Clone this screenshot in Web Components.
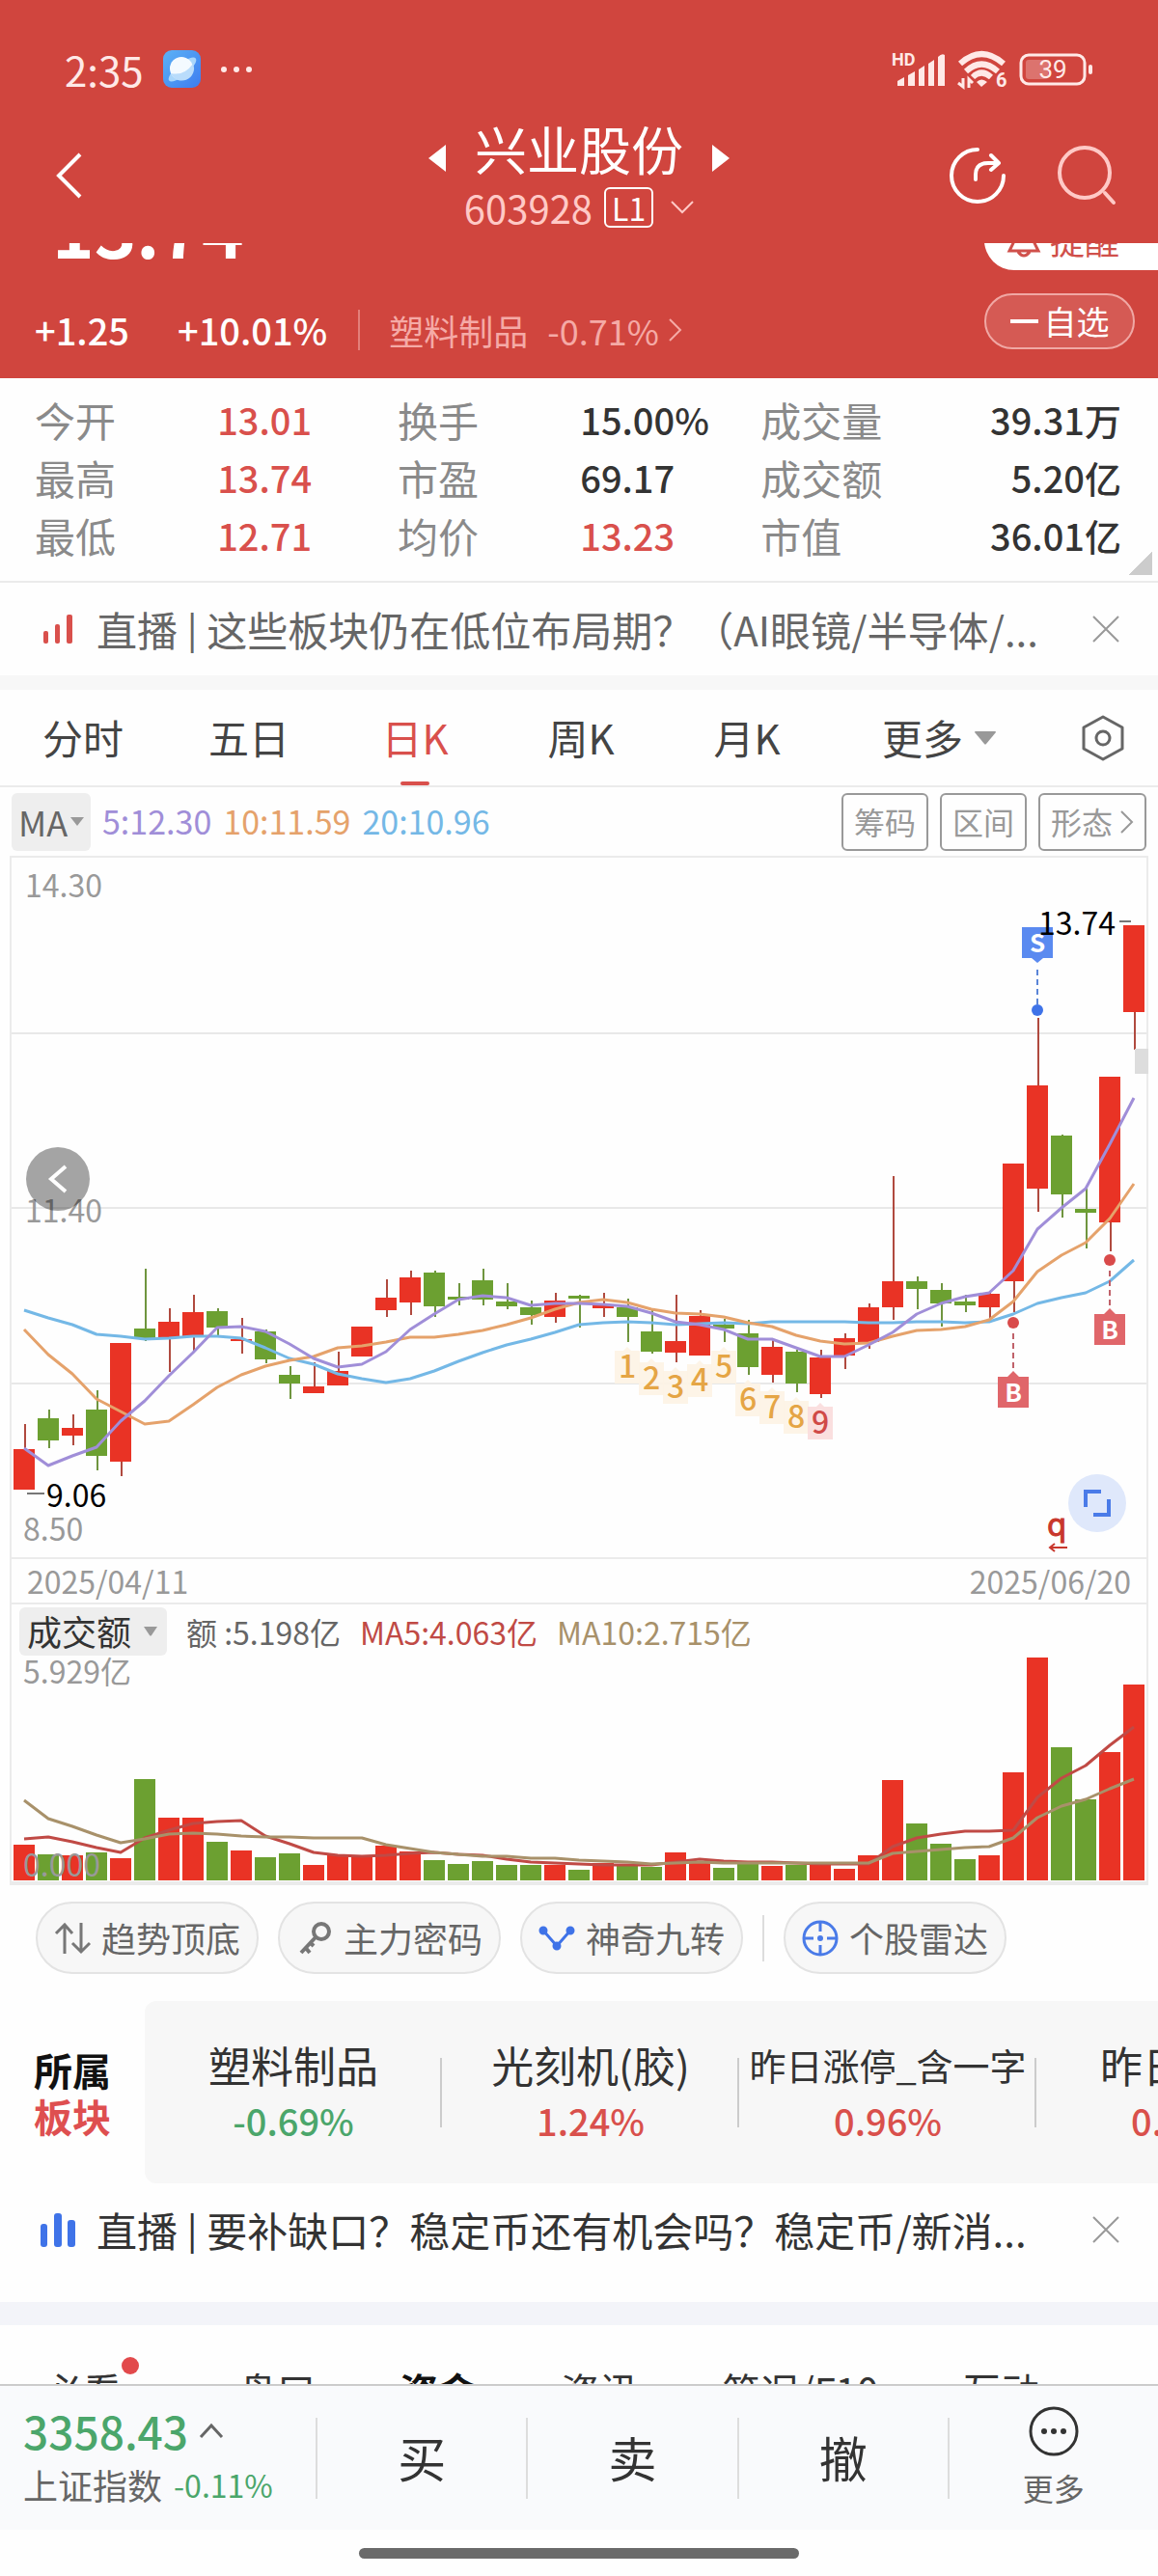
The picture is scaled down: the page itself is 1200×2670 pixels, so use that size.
<!DOCTYPE html>
<html lang="zh-CN">
<head>
<meta charset="utf-8">
<meta name="viewport" content="width=device-width, initial-scale=1">
<title>兴业股份 603928</title>
<style>
  :root {
    --brand: #d0453e;
    --rise: #d9504c;
    --fall: #4ba66b;
    --ink: #333;
    --muted: #8a8a8a;
    --line: #ebebeb;
    --fill: #f7f7f7;
  }

  body {
    margin: 0;
    background: #fefefe;
    color: var(--ink);
    font-family: "Noto Sans CJK SC", sans-serif;
    font-size: 36px;
    line-height: 1.2;
  }
</style>
</head>
<body>
<status-bar></status-bar>
<stock-header code="603928" level="L1">兴业股份</stock-header>
<price-strip></price-strip>
<quote-grid></quote-grid>
<live-notice tone="red">直播 | 这些板块仍在低位布局期？（AI眼镜/半导体/...</live-notice>
<period-tabs></period-tabs>
<ma-legend></ma-legend>
<k-chart></k-chart>
<turnover-chart></turnover-chart>
<tool-chips></tool-chips>
<board-list>
  <board-item change="-0.69%">塑料制品</board-item>
  <board-item change="1.24%">光刻机(胶)</board-item>
  <board-item change="0.96%" small>昨日涨停_含一字</board-item>
  <board-item change="0.96%">昨日涨停</board-item>
</board-list>
<live-notice tone="blue">直播 | 要补缺口？稳定币还有机会吗？稳定币/新消...</live-notice>
<section-tabs></section-tabs>
<trade-bar></trade-bar>

<script>
const reset = `
  :host, * { box-sizing: border-box; }
  svg { display: block; flex: none; overflow: visible; }
  button, select { margin: 0; padding: 0; border: 0; background: none; color: inherit; font: inherit; cursor: pointer; }
  select { appearance: none; }
  a { color: inherit; text-decoration: none; }
`;

class BaseElement extends HTMLElement {
  constructor() {
    super();

    this.attachShadow({ mode: 'open' });
  }

  connectedCallback() {
    this.shadowRoot.innerHTML = `<style>${reset}${this.styles()}</style>${this.markup()}`;
  }
}

customElements.define('status-bar', class extends BaseElement {
  styles() {
    return `
      :host { display: flex; justify-content: space-between; align-items: center; height: 126px; padding: 18px 66px 0 67px; background: var(--brand); color: #ffe9e7; }
      .left, .right { display: flex; align-items: center; }
      .left { gap: 20px; font-size: 42px; }
      .right { gap: 12px; }
    `;
  }

  markup() {
    return `
      <div class="left">
        <span>2:35</span>
        <svg width="39" height="39" viewBox="0 0 39 39">
          <defs><linearGradient id="app" x1="0" y1="0" x2="1" y2="1"><stop offset="0" stop-color="#5cb2f6"/><stop offset="1" stop-color="#3d7cf0"/></linearGradient></defs>
          <rect width="39" height="39" rx="9" fill="url(#app)"/>
          <ellipse cx="20" cy="20" rx="18" ry="6" transform="rotate(-40 20 20)" fill="#a9d6fb"/>
          <circle cx="19" cy="19" r="12" fill="#f4faff"/>
          <path d="M8 24Q22 27 31 14A12 12 0 0 1 8 24Z" fill="#b9dcfb"/>
        </svg>
        <svg width="34" height="8" viewBox="0 0 34 8" fill="currentColor"><circle cx="4" cy="4" r="3"/><circle cx="17" cy="4" r="3"/><circle cx="30" cy="4" r="3"/></svg>
      </div>
      <div class="right">
        <svg width="56" height="36" viewBox="0 0 56 36" fill="currentColor">
          <text x="0" y="14" font-size="18" font-weight="700" font-family="Roboto, sans-serif">HD</text>
          <path d="M6 35v-5l7-4v9zM17 35V24l7-4v15zM28 35V18l6-4v21zM38 35V12l6-4v27zM48 35V5q4-4 7-2v32z"/>
        </svg>
        <svg width="52" height="40" viewBox="0 0 52 40" fill="none" stroke="currentColor" stroke-width="6">
          <path d="M3 14Q25 -6 48 14M9 22Q25 7 42 22M16 28Q25 19 35 28"/>
          <path d="M20 33Q25 28 31 33L25 38Z" fill="currentColor" stroke="none"/>
          <path d="M6 29v9l-5-4M12 39v-9l4 4" stroke-width="3"/>
          <text x="40" y="38" font-size="20" font-weight="700" font-family="Roboto, sans-serif" fill="currentColor" stroke="none">6</text>
        </svg>
        <svg width="78" height="34" viewBox="0 0 78 34">
          <rect x="2" y="2" width="66" height="30" rx="8" fill="none" stroke="currentColor" stroke-width="3"/>
          <rect x="7" y="7" width="23" height="20" rx="3" fill="#fff" opacity=".25"/>
          <rect x="72" y="12" width="4" height="10" rx="2" fill="currentColor"/>
          <text x="35" y="26" text-anchor="middle" font-size="26" font-family="Roboto, sans-serif" fill="currentColor">39</text>
        </svg>
      </div>
    `;
  }
});

customElements.define('stock-header', class extends BaseElement {
  styles() {
    return `
      :host { display: grid; grid-template-columns: 1fr auto 1fr; align-items: start; height: 126px; padding: 0 44px; background: var(--brand); color: #fff; }
      .back { justify-self: start; margin-top: 32px; padding-left: 12px; }
      .names { display: flex; flex-direction: column; align-items: center; }
      h1 { display: flex; align-items: center; gap: 30px; height: 56px; margin: 0; font-size: 54px; font-weight: 400; line-height: 56px; white-space: nowrap; }
      h1 button { padding-top: 20px; }
      .code { display: flex; align-items: center; gap: 12px; height: 66px; color: #ffc9c6; font-size: 40px; }
      .level { padding: 0 6px; border: 2px solid #fff; border-radius: 6px; color: #fff; font-size: 32px; line-height: 38px; }
      .code svg { margin-left: 6px; }
      .tools { display: flex; justify-self: end; gap: 54px; margin-top: 26px; }
    `;
  }

  markup() {
    return `
      <button class="back" aria-label="返回"><svg width="30" height="48" viewBox="0 0 30 48" fill="none" stroke="currentColor" stroke-width="4"><path d="M27 2L5 24l22 22"/></svg></button>
      <div class="names">
        <h1>
          <button aria-label="上一只"><svg width="18" height="28" viewBox="0 0 18 28" fill="currentColor"><path d="M18 0v28L0 14z"/></svg></button>
          <slot></slot>
          <button aria-label="下一只"><svg width="18" height="28" viewBox="0 0 18 28" fill="currentColor"><path d="M0 0v28l18-14z"/></svg></button>
        </h1>
        <div class="code">
          <span>${this.getAttribute('code')}</span>
          <span class="level">${this.getAttribute('level')}</span>
          <svg width="24" height="14" viewBox="0 0 24 14" fill="none" stroke="currentColor" stroke-width="2"><path d="M1 1l11 11L23 1"/></svg>
        </div>
      </div>
      <div class="tools">
        <button aria-label="分享"><svg width="60" height="60" viewBox="0 0 60 60" fill="none" stroke="currentColor" stroke-width="4" stroke-linecap="round" stroke-linejoin="round"><path d="M31 3A27 27 0 1 0 58 30"/><path d="M29 34V29Q29 17 42 17H52M45 9l8 8-8 7"/></svg></button>
        <button aria-label="搜索"><svg width="60" height="60" viewBox="0 0 60 60" fill="none" stroke="#ffc9c6" stroke-width="4" stroke-linecap="round"><circle cx="28" cy="27" r="26"/><path d="M49 48l9 10"/></svg></button>
      </div>
    `;
  }
});

customElements.define('price-strip', class extends BaseElement {
  styles() {
    return `
      :host { display: block; height: 140px; background: var(--brand); color: #fff; }
      .peek { display: flex; justify-content: space-between; align-items: flex-end; height: 28px; padding-left: 54px; overflow: hidden; }
      .price { padding-bottom: 7px; font-size: 74px; font-weight: 700; line-height: 74px; }
      .remind { display: flex; align-items: center; gap: 10px; height: 62px; padding: 0 40px 0 24px; border-radius: 31px 0 0 31px; background: #fff; color: #d0504b; font-size: 36px; }
      .row { display: flex; justify-content: space-between; align-items: flex-start; padding: 24px 24px 0 36px; }
      .change, .industry { display: flex; align-items: center; }
      .change { height: 76px; gap: 50px; font-size: 38px; font-weight: 500; }
      .industry { gap: 20px; margin-left: -18px; padding-left: 30px; border-left: 2px solid #e37f7a; color: #f5aaa6; font-size: 36px; font-weight: 400; line-height: 42px; }
      .industry svg { margin-left: -10px; }
      .pill { display: flex; align-items: center; justify-content: center; gap: 6px; width: 156px; height: 58px; border: 2px solid #f0a8a4; border-radius: 29px; background: #d55a54; font-size: 34px; }
    `;
  }

  markup() {
    return `
      <div class="peek">
        <div class="price">13.74</div>
        <button class="remind"><svg width="34" height="36" viewBox="0 0 34 36" fill="none" stroke="currentColor" stroke-width="3"><path d="M2 29h30l-4-8V14a11 11 0 0 0-22 0v7zM11 30q6 8 12 0"/></svg>提醒</button>
      </div>
      <div class="row">
        <div class="change">
          <span>+1.25</span>
          <span>+10.01%</span>
          <a class="industry" href="#industry"><span>塑料制品</span><span>-0.71%</span><svg width="14" height="24" viewBox="0 0 14 24" fill="none" stroke="currentColor" stroke-width="2"><path d="M1 1l11 11L1 23"/></svg></a>
        </div>
        <button class="pill"><svg width="29" height="4" viewBox="0 0 29 4"><path d="M0 2h29" stroke="#fff" stroke-width="4"/></svg>自选</button>
      </div>
    `;
  }
});

customElements.define('quote-grid', class extends BaseElement {
  static rows = [
    ['今开', '13.01', 'up', '换手', '15.00%', '', '成交量', '39.31万'],
    ['最高', '13.74', 'up', '市盈', '69.17', '', '成交额', '5.20亿'],
    ['最低', '12.71', 'up', '均价', '13.23', 'up', '市值', '36.01亿'],
  ];

  styles() {
    return `
      :host { display: block; padding: 13px 38px 17px 36px; border-bottom: 2px solid var(--line); background: linear-gradient(135deg, transparent 50%, #ccc 50%) right 6px bottom 6px / 24px 24px no-repeat; }
      table { width: 100%; border-collapse: collapse; table-layout: fixed; }
      th, td { height: 60px; padding: 0; font-weight: 400; text-align: left; line-height: 48px; white-space: nowrap; }
      th { width: 16.8%; color: var(--muted); font-size: 42px; }
      td { width: 16.6%; font-size: 38px; font-weight: 500; }
      td:last-child { width: auto; text-align: right; }
      .up { color: var(--rise); }
    `;
  }

  markup() {
    return `<table>${this.constructor.rows.map(this.#row).join('')}</table>`;
  }

  #row([a, av, ac, b, bv, bc, c, cv]) {
    return `
      <tr>
        <th scope="row">${a}</th><td class="${ac}">${av}</td>
        <th scope="row">${b}</th><td class="${bc}">${bv}</td>
        <th scope="row">${c}</th><td>${cv}</td>
      </tr>
    `;
  }
});

customElements.define('live-notice', class extends BaseElement {
  static icons = {
    red: '<svg width="36" height="36" viewBox="0 0 36 36" fill="#d9504c"><rect x="3" y="20" width="5" height="13" rx="2"/><rect x="15" y="13" width="5" height="20" rx="2"/><rect x="27" y="3" width="6" height="30" rx="2"/></svg>',
    blue: '<svg width="36" height="36" viewBox="0 0 36 36" fill="#3f73e8"><rect x="0" y="12" width="7" height="24" rx="3"/><rect x="14" y="1" width="8" height="35" rx="3"/><rect x="28" y="8" width="8" height="28" rx="3"/></svg>',
  };

  styles() {
    return `
      :host { display: flex; align-items: center; height: 96px; padding: 0 40px 0 42px; font-size: 42px; }
      :host([tone="red"]) { color: #666; }
      a { flex: 1; margin-left: 22px; overflow: hidden; white-space: nowrap; }
      button { color: #999; }
    `;
  }

  markup() {
    return `
      ${this.constructor.icons[this.getAttribute('tone')]}
      <a href="#live"><slot></slot></a>
      <button aria-label="关闭"><svg width="28" height="28" viewBox="0 0 28 28" fill="none" stroke="currentColor" stroke-width="2"><path d="M1 1l26 26M27 1L1 27"/></svg></button>
    `;
  }
});

customElements.define('period-tabs', class extends BaseElement {
  styles() {
    return `
      :host { display: flex; height: 116px; border-top: 15px solid var(--fill); border-bottom: 2px solid var(--line); color: #444; font-size: 42px; }
      button { display: flex; align-items: center; justify-content: center; flex: 172; }
      .on { flex-direction: column; color: var(--rise); }
      .on::before { content: ""; height: 4px; }
      .on span { display: flex; align-items: center; flex: 1; }
      .on::after { content: ""; width: 30px; height: 4px; border-radius: 2px; background: var(--rise); }
      .more { flex: 226; gap: 12px; }
      .set { flex: 114; color: #666; }
    `;
  }

  markup() {
    return `
      <button>分时</button>
      <button>五日</button>
      <button class="on"><span>日K</span></button>
      <button>周K</button>
      <button>月K</button>
      <button class="more">更多<svg width="22" height="14" viewBox="0 0 22 14" fill="#999"><path d="M0 1q0-1 1-1h20q1 0 1 1L12 13q-1 1-2 0z"/></svg></button>
      <button class="set" aria-label="设置"><svg width="44" height="48" viewBox="0 0 44 48" fill="none" stroke="currentColor" stroke-width="3" stroke-linejoin="round"><path d="M22 2l20 11v22L22 46 2 35V13z"/><circle cx="22" cy="24" r="7"/></svg></button>
    `;
  }
});

customElements.define('ma-legend', class extends BaseElement {
  styles() {
    return `
      :host { display: flex; align-items: center; gap: 12px; height: 71px; padding: 0 12px; font-size: 34px; }
      label { display: flex; align-items: center; gap: 2px; height: 60px; padding: 0 7px; border-radius: 6px; background: #eee; color: #666; font-size: 36px; }
      .ma5 { color: #a08ed8; }
      .ma10 { color: #e5a26b; }
      .ma20 { color: #74b8e6; margin-right: auto; }
      button { display: flex; align-items: center; gap: 8px; height: 60px; padding: 0 11px; border: 2px solid #999; border-radius: 6px; color: #999; font-size: 32px; }
    `;
  }

  markup() {
    return `
      <label><select aria-label="均线指标"><option>MA</option></select><svg width="14" height="9" viewBox="0 0 14 9" fill="#999"><path d="M0 0h14L7 9z"/></svg></label>
      <span class="ma5">5:12.30</span>
      <span class="ma10">10:11.59</span>
      <span class="ma20">20:10.96</span>
      <button>筹码</button>
      <button>区间</button>
      <button>形态<svg width="14" height="24" viewBox="0 0 14 24" fill="none" stroke="currentColor" stroke-width="2"><path d="M1 1l11 11L1 23"/></svg></button>
    `;
  }
});

const RED = '#e93325';
const GREEN = '#6ca031';
const centerOf = i => 15 + i * 25;

// [up, high, body top, body bottom, low], one trading day each
const candles = [
  [1, 589, 615, 657, 657], [0, 574, 583, 606, 614], [1, 579, 593, 601, 611], [0, 554, 574, 622, 637],
  [1, 505, 505, 628, 643], [0, 428, 490, 500, 503], [1, 469, 483, 500, 535], [1, 455, 473, 498, 515],
  [0, 469, 472, 489, 497], [1, 479, 501, 503, 516], [0, 491, 493, 522, 526], [0, 529, 538, 547, 563],
  [1, 525, 550, 557, 557], [1, 514, 534, 549, 549], [1, 488, 488, 519, 519], [1, 439, 458, 471, 478],
  [1, 430, 437, 463, 476], [0, 430, 432, 467, 478], [0, 443, 457, 460, 466], [0, 428, 440, 460, 466],
  [0, 443, 462, 467, 470], [0, 461, 468, 476, 486], [1, 453, 461, 478, 484], [0, 455, 456, 459, 489],
  [1, 453, 466, 469, 478], [0, 459, 468, 478, 504], [0, 470, 493, 514, 516], [1, 455, 503, 515, 525],
  [1, 471, 477, 518, 518], [0, 480, 486, 490, 504], [0, 481, 495, 530, 538], [1, 500, 509, 538, 546],
  [0, 512, 514, 547, 556], [1, 512, 520, 558, 562], [1, 495, 500, 518, 532], [1, 464, 468, 504, 511],
  [1, 332, 441, 468, 481], [0, 436, 441, 449, 470], [0, 443, 450, 464, 488], [0, 455, 462, 466, 473],
  [1, 451, 454, 468, 480], [1, 319, 319, 441, 473], [1, 168, 238, 345, 369], [0, 289, 290, 351, 375],
  [0, 344, 366, 370, 407], [1, 229, 229, 380, 410], [1, 72, 72, 162, 201],
];

const ma5 = [614, 632, 622, 613, 586, 565, 539, 515, 489, 488, 493, 506, 521, 530, 527, 514, 491, 475, 460, 456, 458, 466, 464, 464, 465, 467, 474, 483, 486, 491, 501, 501, 510, 519, 519, 507, 494, 475, 464, 457, 453, 430, 387, 365, 345, 299, 251];
const ma10 = [491, 517, 537, 563, 576, 589, 586, 569, 551, 538, 529, 523, 519, 510, 508, 504, 499, 499, 496, 492, 486, 479, 470, 463, 460, 463, 470, 474, 475, 478, 484, 488, 497, 503, 506, 505, 498, 492, 491, 488, 481, 462, 431, 414, 401, 376, 340];
const ma20 = [471, 479, 486, 496, 498, 501, 500, 498, 498, 500, 510, 521, 527, 537, 542, 546, 542, 534, 524, 515, 507, 501, 494, 486, 484, 483, 484, 486, 485, 484, 485, 483, 483, 483, 483, 484, 484, 483, 483, 484, 483, 475, 464, 458, 453, 441, 419];

const polyline = (values, color, base = 0) => {
  const points = values.map((v, i) => `${centerOf(i)},${base ? base - v : v}`).join(' ');
  return `<polyline points="${points}" fill="none" stroke="${color}" stroke-width="3" stroke-linejoin="round"/>`;
};

customElements.define('k-chart', class extends BaseElement {
  styles() {
    return `
      :host { display: block; position: relative; margin: 0 10px; }
      svg { width: 100%; height: auto; }
      text { font-size: 32px; }
      .axis { fill: #999; }
      .price { fill: #000; }
      .mark { font-size: 26px; font-weight: 700; text-anchor: middle; fill: #fff; }
      .nine { font-size: 32px; text-anchor: middle; font-weight: 500; }
      .hint { font-family: "DejaVu Sans", sans-serif; fill: #c8372c; stroke: #c8372c; }
      button { position: absolute; border-radius: 50%; }
      button svg { width: 100%; }
      .prev { left: 17px; top: 302px; width: 66px; height: 66px; background: #000; opacity: .35; }
      .expand { right: 23px; top: 641px; width: 60px; height: 60px; background: #dfe8fb; }
      .dates { display: flex; justify-content: space-between; align-items: center; height: 47px; padding: 0 16px; border: solid var(--line); border-width: 0 2px 2px; color: #999; font-size: 32px; }
    `;
  }

  #candles() {
    return candles.map(([up, high, top, bottom, low], i) => {
      const x = centerOf(i);
      return `<path d="M${x + 1} ${high}V${low}" stroke="${up ? '#b04a3f' : '#6f953f'}" stroke-width="2"/><rect x="${x - 11}" y="${top}" width="22" height="${bottom - top}" fill="${up ? RED : GREEN}"/>`;
    }).join('');
  }

  #nineTurn() {
    return candles.slice(25, 34).map(([, , , , low], n) => {
      const x = centerOf(n + 25);
      const y = low + 9;
      const last = n === 8;
      return `<path d="M${x - 13} ${y}h9l4-4 4 4h9v34h-26z" fill="${last ? '#f9dcdc' : '#fdf3e4'}" fill-opacity=".9"/><text class="nine" x="${x}" y="${y + 28}" fill="${last ? '#d04a48' : '#e5a545'}">${n + 1}</text>`;
    }).join('');
  }

  #buy(x, y) {
    return `
      <circle cx="${x}" cy="${y}" r="6" fill="#d94a4a"/>
      <path d="M${x} ${y + 11}v38" stroke="#c0616a" stroke-width="2" stroke-dasharray="6 4"/>
      <path d="M${x - 16} ${y + 56}h10l6-6 6 6h10v32h-32z" fill="#e0666a"/>
      <text class="mark" x="${x}" y="${y + 82}">B</text>
    `;
  }

  markup() {
    return `
      <svg viewBox="0 0 1180 729" role="img" aria-label="日K线">
        <path d="M1 184H1180M1 365H1180M1 547H1180" stroke="#e8e8e8" stroke-width="2"/>
        <path d="M1 729V1H1179V729M1 728H1179" fill="none" stroke="#ebebeb" stroke-width="2"/>
        <text class="axis" x="16" y="43">14.30</text>
        <text class="axis" x="16" y="380">11.40</text>
        <text class="axis" x="14" y="710">8.50</text>
        ${this.#candles()}
        ${polyline(ma20, '#74b8e6')}
        ${polyline(ma10, '#e5a26b')}
        ${polyline(ma5, '#a08ed8')}
        ${this.#nineTurn()}
        <path d="M1049 74h32v32h-10l-6 5-6-5h-10z" fill="#5a8af0"/>
        <text class="mark" x="1065" y="100">S</text>
        <path d="M1065 118v38" stroke="#5a85d8" stroke-width="2" stroke-dasharray="6 4"/>
        <circle cx="1065" cy="160" r="6" fill="#3f73e8"/>
        ${this.#buy(1040, 484)}
        ${this.#buy(1140, 419)}
        <path d="M18 661h18M1150 68h12" stroke="#777" stroke-width="2"/>
        <text class="price" x="38" y="675">9.06</text>
        <text class="price" x="1066" y="82">13.74</text>
        <rect x="1166" y="200" width="14" height="26" fill="#ddd"/>
        <text class="hint" x="1075" y="705">q</text>
        <path d="M1096 717h-18m5-4l-5 4 5 4" fill="none" stroke="#c8372c" stroke-width="2"/>
      </svg>
      <button class="prev" aria-label="更早"><svg viewBox="0 0 66 66" fill="none" stroke="#fff" stroke-width="4"><path d="M41 20L26 33l15 13"/></svg></button>
      <button class="expand" aria-label="全屏"><svg viewBox="0 0 60 60" fill="none" stroke="#4a7be8" stroke-width="4"><path d="M18 34V18h16M42 26v16H26"/></svg></button>
      <div class="dates"><span>2025/04/11</span><span>2025/06/20</span></div>
    `;
  }
});

customElements.define('turnover-chart', class extends BaseElement {
  static bars = [37, 27, 26, 29, 23, 105, 65, 65, 40, 31, 24, 28, 16, 27, 25, 36, 30, 21, 17, 20, 16, 16, 16, 11, 18, 16, 14, 29, 18, 13, 18, 15, 16, 16, 12, 26, 104, 59, 38, 22, 26, 112, 231, 138, 84, 133, 203];
  static ma5 = [43, 45, 40, 34, 29, 44, 52, 59, 61, 62, 46, 38, 29, 26, 25, 26, 28, 29, 27, 26, 22, 19, 18, 17, 16, 16, 16, 19, 22, 20, 19, 19, 18, 17, 17, 17, 35, 44, 48, 51, 51, 52, 86, 106, 119, 140, 159];
  static ma10 = [83, 64, 56, 47, 39, 43, 48, 49, 48, 46, 45, 45, 44, 44, 44, 37, 33, 29, 27, 25, 25, 23, 23, 21, 20, 19, 17, 18, 19, 18, 18, 18, 18, 18, 18, 18, 28, 30, 32, 34, 35, 44, 65, 77, 84, 95, 105];

  styles() {
    return `
      :host { display: block; margin: 0 10px; border: solid var(--line); border-width: 0 2px 4px; }
      .legend { display: flex; align-items: center; gap: 20px; height: 55px; padding: 3px 8px 2px; font-size: 32px; }
      label { display: flex; align-items: center; gap: 12px; height: 50px; padding: 0 10px 0 8px; border-radius: 6px; background: #eee; font-size: 36px; }
      .amount { color: #666; }
      .ma5 { color: #c04a45; }
      .ma10 { color: #a8916a; }
      .plot { width: 100%; height: auto; }
      text { font-size: 32px; fill: #999; }
    `;
  }

  #bars() {
    return this.constructor.bars.map((h, i) => `<rect x="${centerOf(i) - 11}" y="${231 - h}" width="22" height="${h}" fill="${candles[i][0] ? RED : GREEN}"/>`).join('');
  }

  markup() {
    const { ma5, ma10 } = this.constructor;
    return `
      <div class="legend">
        <label><select aria-label="副图指标"><option>成交额</option></select><svg width="14" height="10" viewBox="0 0 14 10" fill="#999"><path d="M0 0h14L8 9q-1 1-2 0z"/></svg></label>
        <span class="amount">额 :5.198亿</span>
        <span class="ma5">MA5:4.063亿</span>
        <span class="ma10">MA10:2.715亿</span>
      </div>
      <svg class="plot" viewBox="2 0 1176 232" role="img" aria-label="成交额">
        <text x="14" y="27">5.929亿</text>
        ${this.#bars()}
        ${polyline(ma5, '#c04a45', 231)}
        ${polyline(ma10, '#a8916a', 231)}
        <text x="14" y="227">0.000</text>
      </svg>
    `;
  }
});

customElements.define('tool-chips', class extends BaseElement {
  styles() {
    return `
      :host { display: flex; align-items: center; gap: 20px; padding: 17px 37px 28px; color: #666; }
      button { display: flex; align-items: center; gap: 11px; height: 75px; padding: 0 17px; border: 2px solid #e3e3e3; border-radius: 38px; background: var(--fill); font-size: 36px; white-space: nowrap; }
      i { width: 2px; height: 48px; background: #ddd; }
    `;
  }

  markup() {
    return `
      <button><svg width="38" height="38" viewBox="0 0 38 38" fill="none" stroke="#777" stroke-width="3"><path d="M11 35V5M2 14l9-9 8 9M28 3v30M19 24l9 9 9-9"/></svg>趋势顶底</button>
      <button><svg width="38" height="38" viewBox="0 0 38 38" fill="none" stroke="#777" stroke-width="4"><circle cx="26" cy="12" r="8"/><path d="M20 18L5 34M9 28l5 6M14 23l4 4"/></svg>主力密码</button>
      <button><svg width="38" height="38" viewBox="0 0 38 38" fill="#3f73e8" stroke="#3f73e8" stroke-width="3"><path d="M5 11l14 16 14-16" fill="none"/><circle cx="5" cy="11" r="3"/><circle cx="33" cy="11" r="3"/><circle cx="19" cy="27" r="3"/></svg>神奇九转</button>
      <i></i>
      <button><svg width="38" height="38" viewBox="0 0 38 38" fill="none" stroke="#4a7be8" stroke-width="3"><circle cx="19" cy="19" r="17"/><path d="M19 2v10M19 26v10M2 19h10M26 19h10"/><circle cx="19" cy="19" r="3" fill="#4a7be8" stroke="none"/></svg>个股雷达</button>
    `;
  }
});

customElements.define('board-list', class extends BaseElement {
  styles() {
    return `
      :host { display: flex; align-items: center; height: 189px; overflow: hidden; }
      h2 { display: flex; flex-direction: column; flex: none; width: 150px; margin: 0; padding-left: 35px; font-size: 40px; line-height: 48px; color: #111; }
      em { font-style: normal; color: #de4f50; }
      .track { display: flex; flex: 1; align-items: center; min-width: 0; height: 100%; overflow: hidden; border-radius: 12px 0 0 12px; background: var(--fill); }
    `;
  }

  markup() {
    return `
      <h2>所属<em>板块</em></h2>
      <div class="track"><slot></slot></div>
    `;
  }
});

customElements.define('board-item', class extends BaseElement {
  styles() {
    return `
      :host { display: flex; flex-direction: column; flex: none; align-items: center; width: 308px; font-size: 44px; white-space: nowrap; background: linear-gradient(#ccc, #ccc) right center / 2px 72px no-repeat; }
      .name { height: 58px; line-height: 58px; }
      :host([small]) .name { font-size: 38px; }
      .change { height: 58px; font-size: 38px; font-weight: 500; line-height: 58px; color: var(--rise); }
      .down { color: var(--fall); }
    `;
  }

  markup() {
    const change = this.getAttribute('change');
    return `
      <span class="name"><slot></slot></span>
      <span class="change ${change.startsWith('-') ? 'down' : ''}">${change}</span>
    `;
  }
});

customElements.define('section-tabs', class extends BaseElement {
  styles() {
    return `
      :host { display: block; margin-top: 27px; border-top: 24px solid #f3f4f9; }
      nav { display: flex; gap: 87px; height: 61px; padding: 44px 46px 0; overflow: hidden; font-size: 40px; line-height: 46px; white-space: nowrap; }
      .on { color: #111; font-weight: 700; }
      .new { display: flex; margin-right: 34px; }
      .new::after { content: ""; width: 18px; height: 18px; margin: -11px -18px 0 0; border-radius: 50%; background: #e24a4c; }
    `;
  }

  markup() {
    return `
      <nav>
        <a class="new" href="#must">必看</a>
        <a href="#tape">盘口</a>
        <a class="on" href="#funds">资金</a>
        <a href="#news">资讯</a>
        <a href="#f10">简况/F10</a>
        <a href="#talk">互动</a>
      </nav>
    `;
  }
});

customElements.define('trade-bar', class extends BaseElement {
  styles() {
    return `
      :host { display: block; padding-bottom: 17px; }
      .bar { display: flex; align-items: center; height: 151px; border-top: 2px solid #ccc; background: #f9fafc; }
      .bar > * { flex: 219; height: 84px; }
      .bar > * + * { border-left: 2px solid #ddd; }
      .bar > .index { display: flex; flex-direction: column; flex: 307; justify-content: center; padding-left: 24px; white-space: nowrap; }
      .index div { display: flex; flex: none; align-items: center; height: 56px; gap: 12px; }
      .point { color: var(--fall); font-size: 46px; font-weight: 500; }
      .name { color: #666; font-size: 36px; }
      .pct { color: var(--fall); font-size: 32px; }
      button { padding-bottom: 4px; font-size: 50px; line-height: 76px; }
      .more { display: flex; flex-direction: column; align-items: center; justify-content: center; gap: 8px; padding: 0; color: #666; font-size: 32px; line-height: 48px; }
      .home { width: 38%; height: 11px; margin: 19px auto 0; border-radius: 6px; background: #6a6a6a; }
    `;
  }

  markup() {
    return `
      <div class="bar">
        <a class="index" href="#sh">
          <div><span class="point">3358.43</span><svg width="24" height="15" viewBox="0 0 24 15" fill="none" stroke="#666" stroke-width="3"><path d="M1 14L12 2l11 12"/></svg></div>
          <div><span class="name">上证指数</span><span class="pct">-0.11%</span></div>
        </a>
        <button>买</button>
        <button>卖</button>
        <button>撤</button>
        <button class="more"><svg width="52" height="52" viewBox="0 0 52 52" fill="none" stroke="#333" stroke-width="3"><circle cx="26" cy="26" r="24"/><g fill="#333" stroke="none"><circle cx="16" cy="26" r="3"/><circle cx="26" cy="26" r="3"/><circle cx="36" cy="26" r="3"/></g></svg>更多</button>
      </div>
      <div class="home"></div>
    `;
  }
});
</script>
</body>
</html>
